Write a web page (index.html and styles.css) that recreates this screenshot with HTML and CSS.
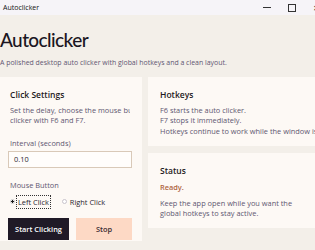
FILE: index.html
```html
<!DOCTYPE html>
<html lang="en">
<head>
<meta charset="UTF-8">
<meta name="viewport" content="width=device-width, initial-scale=1.0">
<title>Autoclicker</title>
<link rel="stylesheet" href="styles.css">
</head>
<body>

<div class="titlebar">
    <div class="title">Autoclicker</div>
    <div class="controls">
        <span class="ctl min"></span>
        <span class="ctl max"></span>
        <span class="ctl close">✕</span>
    </div>
</div>

<div class="app">
    <h1 class="app-title">Autoclicker</h1>
    <p class="subtitle">A polished desktop auto clicker with global hotkeys and a clean layout.</p>

    <div class="layout">
        <div class="card settings">
            <div class="card-title">Click Settings</div>
            <div class="desc">
                <div class="line">Set the delay, choose the mouse button, and start or stop the</div>
                <div class="line">clicker with F6 and F7.</div>
            </div>
            <div class="label interval-label">Interval (seconds)</div>
            <div class="input">0.10</div>
            <div class="label mouse-label">Mouse Button</div>
            <div class="radios">
                <div class="radio checked"><span class="dot"></span><span class="radio-text focus">Left Click</span></div>
                <div class="radio"><span class="dot"></span><span class="radio-text">Right Click</span></div>
            </div>
            <div class="buttons">
                <div class="btn start">Start Clicking</div>
                <div class="btn stop">Stop</div>
            </div>
        </div>

        <div class="side">
            <div class="card hotkeys">
                <div class="card-title">Hotkeys</div>
                <div class="desc">
                    <div class="line">F6 starts the auto clicker.</div>
                    <div class="line">F7 stops it immediately.</div>
                    <div class="line">Hotkeys continue to work while the window is unfocused.</div>
                </div>
            </div>
            <div class="card status">
                <div class="card-title">Status</div>
                <div class="state">Ready.</div>
                <div class="desc">
                    <div class="line">Keep the app open while you want the</div>
                    <div class="line">global hotkeys to stay active.</div>
                </div>
            </div>
        </div>
    </div>
</div>

</body>
</html>
```

FILE: styles.css
```css
body {
    margin: 0;
    width: 315px;
    height: 250px;
    overflow: hidden;
    background-color: #f3efe9;
    font-family: "Open Sans", "Noto Sans", sans-serif;
    color: #5d5670;
}
.titlebar {
    height: 15px;
    background: #f6f4f8;
    display: flex;
    justify-content: space-between;
    align-items: center;
}
.titlebar .title {
    font-size: 7px;
    color: #111;
    padding-left: 3px;
}
.controls {
    display: flex;
    align-items: center;
    gap: 17px;
    margin-right: -6px;
}
.ctl {
    display: block;
    width: 8px;
    font-size: 8px;
    color: #222;
}
.ctl.min {
    height: 1px;
    background: #333;
}
.ctl.max {
    width: 6px;
    height: 6px;
    border: 1px solid #333;
}
.app-title {
    margin: 13px 0 0 0;
    font-family: Lato, "Open Sans", sans-serif;
    font-size: 19px;
    font-weight: 500;
    color: #1b1622;
    line-height: 24px;
    letter-spacing: -0.6px;
}
.subtitle {
    margin: 6px 0 0 0;
    font-size: 6.95px;
    line-height: 10px;
    color: #5f5672;
    white-space: nowrap;
}
.layout {
    display: grid;
    grid-template-columns: 142px 180px;
    gap: 6px;
    margin-top: 9px;
}
.card {
    background: #fdf9f5;
    box-sizing: border-box;
    overflow: hidden;
}
.card-title {
    font-size: 8.5px;
    font-weight: 600;
    color: #1d1a22;
    line-height: 12px;
}
.desc {
    font-size: 7.4px;
    line-height: 10.3px;
    color: #5e5771;
}
.desc .line {
    white-space: nowrap;
}
.settings {
    height: 164px;
    padding: 12px 10px 0 10px;
}
.settings .desc {
    margin-top: 4px;
    width: 120px;
    overflow: hidden;
}
.label {
    font-size: 7.4px;
    line-height: 10px;
    color: #5e5771;
}
.interval-label {
    margin-top: 12px;
}
.mouse-label {
    margin-top: 12.5px;
}
.input {
    margin: 3px 0 0 -2px;
    height: 17px;
    box-sizing: border-box;
    border: 1px solid #d9c9b8;
    background: #fffdfb;
    font-size: 7.4px;
    line-height: 15px;
    padding-left: 5px;
    color: #2a2530;
}
.radios {
    display: flex;
    gap: 12px;
    margin-top: 5.5px;
    align-items: center;
}
.radio {
    display: flex;
    align-items: center;
    gap: 2px;
}
.dot {
    width: 5px;
    height: 5px;
    border-radius: 50%;
    border: 1px solid #c8c3cc;
    background: #fff;
    box-sizing: border-box;
}
.radio.checked .dot {
    border-color: #ccc;
    background: radial-gradient(circle, #1a1a1a 55%, #fff 60%);
}
.radio-text {
    font-size: 7.4px;
    color: #2a2530;
    line-height: 10px;
    padding: 1px 1px;
}
.radio-text.focus {
    outline: 1px dotted #333;
}
.buttons {
    display: flex;
    gap: 7px;
    margin: 10px 0 0 -2px;
}
.btn {
    height: 22px;
    line-height: 22px;
    text-align: center;
    font-size: 7.4px;
    font-weight: 600;
}
.btn.start {
    width: 61px;
    background: #201a27;
    color: #fff;
}
.btn.stop {
    width: 56px;
    background: #fdd9c5;
    color: #3a2a30;
}
.side {
    display: flex;
    flex-direction: column;
    gap: 7px;
}
.hotkeys {
    height: 69px;
    padding: 12px 12px 0 12px;
}
.hotkeys .desc {
    margin-top: 4px;
    width: 155px;
    overflow: hidden;
}
.status {
    height: 75px;
    padding: 11.5px 12px 0 12px;
}
.state {
    font-size: 7.4px;
    font-weight: 600;
    color: #b0653f;
    margin-top: 5.5px;
    line-height: 10px;
}
.status .desc {
    margin-top: 6px;
}
```
